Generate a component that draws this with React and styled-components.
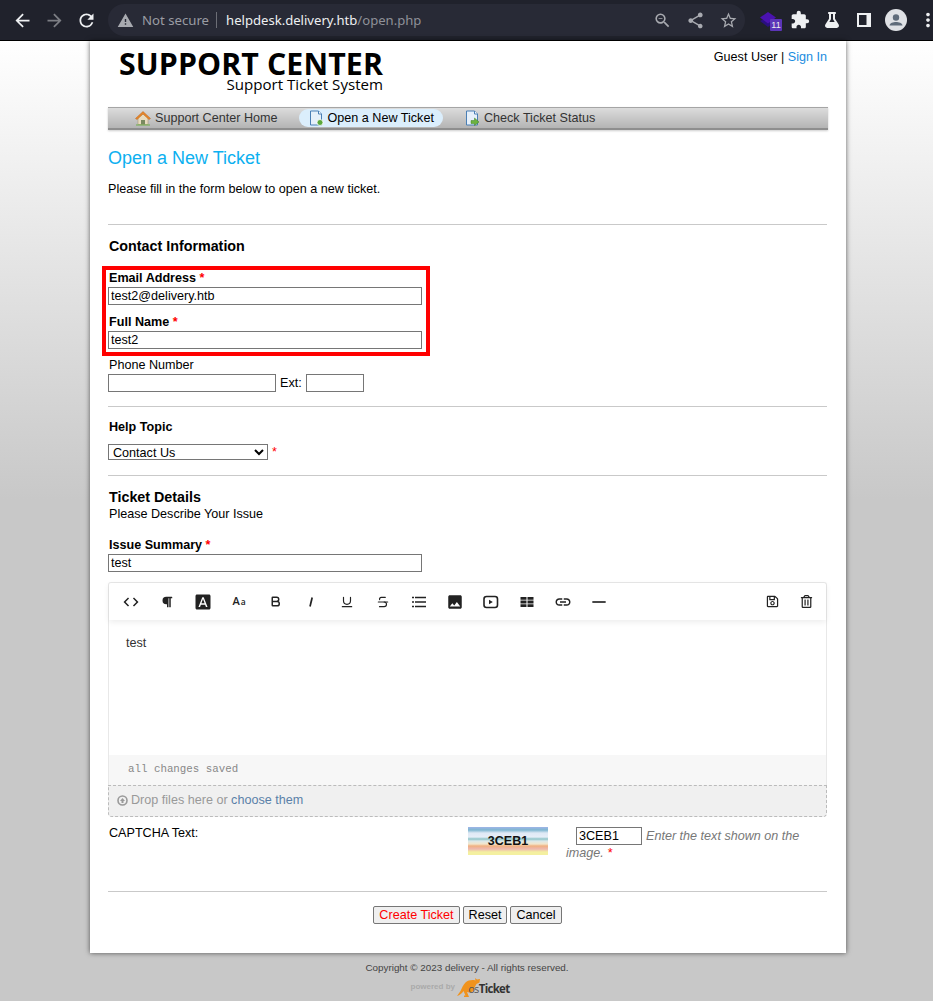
import React from 'react'
import styled, { createGlobalStyle } from 'styled-components'
import {
  MdArrowBack, MdArrowForward, MdRefresh, MdWarning, MdZoomOut, MdShare, MdStarBorder, MdExtension,
  MdMoreVert, MdCode, MdFontDownload, MdImage, MdLink, MdHorizontalRule,
} from 'react-icons/md'
import { FaParagraph, FaRegSave, FaRegTrashAlt, FaFlask } from 'react-icons/fa'
import { Bold, Underline, Strikethrough } from 'lucide-react'

const GlobalStyle = createGlobalStyle`
  html, body { margin: 0; padding: 0; height: 1001px; overflow: hidden; }
  body {
    font-family: "Liberation Sans", Arial, sans-serif;
    font-size: 12.6px;
    color: #000;
    background: linear-gradient(#ffffff 41px, #c8c8c8 500px);
  }
`

const BrowserBar = styled.div`
  height: 40px;
  box-sizing: content-box;
  border-bottom: 1px solid #000;
  background: #20222c;
  display: flex;
  align-items: center;
  color: #e8eaed;
  padding-left: 6px;
  overflow: hidden;
  > * { flex-shrink: 0; }
`
const NavBtn = styled.span`
  width: 32px;
  display: flex;
  justify-content: center;
  color: ${p => (p.$dim ? '#7c7e84' : '#eef0f2')};
  font-size: 21px;
`
const Omnibox = styled.div`
  margin-left: 6px;
  width: 637px;
  height: 32px;
  border-radius: 16px;
  background: #282a36;
  display: flex;
  align-items: center;
  padding-left: 9px;
  box-sizing: border-box;
`
const NotSecure = styled.span`
  color: #9a9ca3;
  font-family: "Noto Sans", sans-serif;
  font-size: 13.2px;
  padding-right: 7px;
  margin-left: 8px;
  border-right: 1px solid #6c6e76;
  line-height: 16px;
`
const Url = styled.span`
  margin-left: 9px;
  color: #eef0f2;
  font-family: "Noto Sans", sans-serif;
  font-size: 13.1px;
  span { color: #8f9198; }
`
const OmniIcons = styled.div`
  margin-left: auto;
  margin-right: 7px;
  display: flex;
  gap: 14px;
  color: #a8aab0;
  font-size: 19px;
`
const ExtIcons = styled.div`
  display: flex;
  align-items: center;
  margin-left: 7px;
  color: #eef0f2;
`
const ExtSlot = styled.span`
  position: relative;
  width: 32px;
  display: flex;
  justify-content: center;
  font-size: ${p => p.$size || 18}px;
`
const ExtBadge = styled.span`
  position: absolute;
  left: 18px;
  top: 8px;
  width: 12px;
  height: 12px;
  background: #5b35b8;
  color: #eee;
  font-size: 9px;
  line-height: 12px;
  text-align: center;
  border-radius: 1px;
`

const Container = styled.div`
  margin-left: 90px;
  width: 756px;
  height: 912px;
  background: #fff;
  box-shadow: 0 0 5px rgba(0, 0, 0, 0.6);
  box-sizing: border-box;
  padding: 0 19px 0 18px;
  position: relative;
`
const Header = styled.div`
  height: 66px;
  display: flex;
  justify-content: space-between;
`
const Logo = styled.div`
  margin: 8px 0 0 11px;
  font-family: "Open Sans", sans-serif;
  text-align: right;
  color: #000;
`
const LogoTitle = styled.div`
  font-size: 30.3px;
  font-weight: 700;
  line-height: 30px;
  letter-spacing: 0.1px;
`
const LogoSub = styled.div`
  font-size: 15.1px;
  line-height: 10px;
`
const UserInfo = styled.div`
  padding-top: 9px;
  line-height: 15px;
  a { color: #1a8ce0; text-decoration: none; }
`
const TopNav = styled.nav`
  height: 20px;
  margin-right: -1px;
  background: linear-gradient(#dcdcdc, #b4b4b4);
  border-top: 1px solid #a5a5a5;
  border-bottom: 2px solid #8e8e8e;
  box-shadow: 0 1px 2px rgba(0, 0, 0, 0.2);
  display: flex;
  align-items: center;
  padding-left: 27px;
  gap: 21px;
`
const NavItem = styled.a`
  display: flex;
  align-items: center;
  height: 18px;
  gap: 4px;
  color: ${p => (p.$active ? '#000' : '#333')};
  background: ${p => (p.$active ? '#dbeefc' : 'transparent')};
  border-radius: 9px;
  padding: ${p => (p.$active ? '0 9px' : '0')};
`
const PageTitle = styled.h1`
  margin: 18px 0 0;
  font-size: 18px;
  font-weight: 400;
  line-height: 21px;
  color: #0cb0f0;
`
const Intro = styled.p`
  margin: 13px 0 0;
  line-height: 15px;
`
const Rule = styled.hr`
  border: 0;
  border-top: 1px solid #c9c9c9;
  margin: ${p => p.$top}px 0 0;
`
const SectionTitle = styled.h3`
  margin: ${p => p.$top}px 0 0 1px;
  font-size: ${p => p.$size || 14.3}px;
  font-weight: 700;
  line-height: 17px;
`
const Field = styled.div`
  margin-top: ${p => p.$top}px;
`
const Label = styled.label`
  display: block;
  margin: 0 0 1px 1px;
  line-height: 15px;
  font-weight: ${p => (p.$bold ? 700 : 400)};
`
const Req = styled.span`
  color: #f00;
`
const TextInput = styled.input`
  display: block;
  box-sizing: border-box;
  width: ${p => p.$w}px;
  height: 18px;
  padding: 0 2px;
  margin: 0;
  border: 1px solid #767676;
  border-radius: 0;
  font: 12.6px "Liberation Sans", Arial, sans-serif;
  color: #000;
`
const InlineRow = styled.div`
  display: flex;
  align-items: center;
  gap: 4px;
`
const TopicSelect = styled.select`
  width: 160px;
  height: 16px;
  padding: 0;
  font: 12.6px "Liberation Sans", Arial, sans-serif;
  background: #fff;
  border: 1px solid #767676;
  border-radius: 0;
  color: #000;
`
const Plain = styled.div`
  margin-left: 1px;
  line-height: 15px;
`
const SectionHint = styled(Plain)`
  margin-top: 1px;
`
const Editor = styled.div`
  margin-top: 10px;
  height: 203px;
  border: 1px solid #e8e8e8;
  border-bottom: 0;
  border-radius: 3px 3px 0 0;
  display: flex;
  flex-direction: column;
  box-sizing: border-box;
`
const Toolbar = styled.div`
  height: 37px;
  padding: 0 3px 0 4px;
  display: flex;
  align-items: center;
  box-shadow: 0 2px 6px rgba(0, 0, 0, 0.08);
  color: #222;
`
const ToolBtn = styled.span`
  width: ${p => p.$w || 36}px;
  display: flex;
  justify-content: center;
  align-items: baseline;
  font-size: ${p => p.$size || 16}px;
  margin-left: ${p => (p.$push ? 'auto' : '0')};
`
const CaseGlyph = styled.span`
  font-family: "Open Sans", sans-serif;
  font-weight: 600;
  font-size: 11px;
  line-height: 12px;
  small { font-size: 8.5px; margin-left: 1px; }
`
const EditorBody = styled.div`
  flex: 1;
  padding: 16px 17px;
  line-height: 15px;
  color: #333;
`
const SaveStatus = styled.div`
  height: 30px;
  background: #f7f7f7;
  padding-left: 19px;
  font: 10.8px/28px "Liberation Mono", monospace;
  color: #888;
`
const DropZone = styled.div`
  height: 32px;
  box-sizing: border-box;
  border: 1px dashed #bbb;
  border-radius: 0 0 4px 4px;
  background: #f0f0f0;
  display: flex;
  align-items: center;
  padding: 0 0 2px 8px;
  gap: 3px;
  color: #999;
  a { color: #5a80a8; }
`
const CaptchaRow = styled.div`
  margin-top: 10px;
  display: grid;
  grid-template-columns: 360px 98px 1fr;
  height: 64px;
`
const CaptchaLabel = styled(Plain)`
  margin-top: -1px;
`
const CaptchaImage = styled.div`
  width: 80px;
  height: 28px;
  background: linear-gradient(#9fb5e8 0, #7fb6d0 3px, #dfe9f5 6px, #e6eef8 10px, #8fc4c8 12px, #dbe8ea 14px, #f2e6cc 17px, #f0b080 19px, #eeb8b0 22px, #f4f0a0 25px, #f4f0a0 28px);
  font: 700 12.500px/28px "Liberation Sans", sans-serif;
  text-align: center;
  color: #111;
`
const CaptchaNote = styled.div`
  line-height: 16px;
  font-style: italic;
  color: #777;
  input {
    display: inline-block;
    margin-left: 10px;
    margin-right: 4px;
    font-style: normal;
  }
`
const Actions = styled.div`
  margin-top: 14px;
  display: flex;
  justify-content: center;
  gap: 3px;
`
const ActionBtn = styled.button`
  height: 18px;
  padding: 0 5px;
  font: 12.6px "Liberation Sans", Arial, sans-serif;
  background: #efefef;
  border: 1px solid #767676;
  border-radius: 2px;
  color: ${p => (p.$primary ? '#f00' : '#000')};
`
const Footer = styled.div`
  margin: 9px 0 0 -1px;
  width: 936px;
  text-align: center;
  color: #444;
  font-size: 9.85px;
  line-height: 12px;
`
const Powered = styled.div`
  margin-top: 3px;
  padding-right: 14px;
  display: flex;
  justify-content: center;
  align-items: center;
  height: 20px;
  color: #aaa;
  font-size: 8px;
  font-weight: 700;
`
const OsText = styled.span`
  font-family: "Open Sans", sans-serif;
  font-size: 11.5px;
  font-weight: 700;
  color: #333;
  letter-spacing: -0.7px;
  margin: 3px 0 0 -13px;
  i { font-style: normal; font-weight: 400; color: #555; font-size: 11px; }
`
const Highlight = styled.div`
  position: absolute;
  left: 12px;
  top: 225px;
  width: 328px;
  height: 90px;
  box-sizing: border-box;
  border: 4px solid #f00;
`

const DocIcon = ({ badge }) => (
  <svg width="16" height="16" viewBox="0 0 16 16">
    <path d="M2.5 1h8l3 3v11h-11z" fill="#e6f0fa" stroke="#4a7fb5" />
    <path d="M10.5 1v3h3" fill="#fff" stroke="#4a7fb5" />
    {badge === 'plus'
      ? <circle cx="12" cy="12.5" r="3" fill="#5aa83c" stroke="#fff" strokeWidth="0.8" />
      : <path d="M7 10.5h3.5V8l4.5 4-4.5 3.5V13.5H7z" fill="#6cb33f" stroke="#3f7f20" strokeWidth="0.5" />}
  </svg>
)

const HomeIcon = () => (
  <svg width="16" height="16" viewBox="0 0 16 16">
    <path d="M3 8v6.5h10V8L8 3.5z" fill="#e8dcc0" stroke="#a89870" strokeWidth="0.6" />
    <path d="M.5 8.5 8 1.5l7.5 7-1.5 1L8 4 2 9.5z" fill="#e8862a" stroke="#b8641a" strokeWidth="0.5" />
    <path d="M6 10h4v4.5H6z" fill="#7a8a60" />
    <path d="M1 14.5h14v1H1z" fill="#6fae4a" />
  </svg>
)

const ItalicIcon = () => (
  <svg width="16" height="16" viewBox="0 0 16 16">
    <path d="M9.2 3.5 7 12.5" stroke="#222" strokeWidth="1.7" fill="none" />
  </svg>
)

const ListIcon = () => (
  <svg width="16" height="16" viewBox="0 0 16 16">
    <path d="M1 3.5h2M4 3.5h11M1 8h2M4 8h11M1 12.5h2M4 12.5h11" stroke="#222" strokeWidth="1.6" fill="none" />
  </svg>
)

const VideoIcon = () => (
  <svg width="16" height="16" viewBox="0 0 16 16">
    <rect x="1" y="2.5" width="13.5" height="11" rx="2.5" fill="none" stroke="#222" strokeWidth="1.6" />
    <path d="M6 5.7v4.6l3.8-2.3z" fill="#222" />
  </svg>
)

const TableIcon = () => (
  <svg width="16" height="16" viewBox="0 0 16 16">
    <path d="M1.5 3h6v2.8h-6zM8.5 3h6v2.8h-6zM1.5 6.6h6v2.8h-6zM8.5 6.6h6v2.8h-6zM1.5 10.2h6V13h-6zM8.5 10.2h6V13h-6z" fill="#222" />
  </svg>
)

const ExtensionLogo = () => (
  <svg width="18" height="18" viewBox="0 0 18 18">
    <path d="M1 10 9 6l8 4-8 6z" fill="#2a0f80" />
    <path d="M1 6.5 9 1l8 5.5-8 6z" fill="#4a12b0" />
  </svg>
)

const SidePanelIcon = () => (
  <svg width="14" height="14" viewBox="0 0 14 14">
    <path d="M0 0h14v14H0z" fill="#eef0f2" />
    <path d="M2 2h7.5v10H2z" fill="#20222c" />
  </svg>
)

const AvatarIcon = () => (
  <svg width="22" height="22" viewBox="0 0 22 22">
    <circle cx="11" cy="11" r="11" fill="#dfe1e5" />
    <circle cx="11" cy="8.5" r="3.2" fill="#5f6b7a" />
    <path d="M4.5 16.500c0-2.500 4-3.600 6.500-3.600s6.500 1.100 6.500 3.600z" fill="#5f6b7a" />
  </svg>
)

const Kangaroo = () => (
  <svg width="24" height="19" viewBox="0 0 24 19">
    <path d="M23 1l-3 .5L18 0l.5 2.500c-3-1-7-.5-10 2C6 7 5 10 3.500 13L0 18c3-1 5-2.500 6.500-5l2 4.500H7V19h5l-2-5c2 1 5 .5 7-1.500l.5-3 2-3.500 3-1.500z" fill="#f0931e" />
  </svg>
)

const App = () => {
  return (
    <>
      <GlobalStyle />
      <BrowserBar>
        <NavBtn><MdArrowBack /></NavBtn>
        <NavBtn $dim><MdArrowForward /></NavBtn>
        <NavBtn><MdRefresh /></NavBtn>
        <Omnibox>
          <MdWarning size={17} color="#a8aab0" />
          <NotSecure>Not secure</NotSecure>
          <Url>helpdesk.delivery.htb<span>/open.php</span></Url>
          <OmniIcons>
            <MdZoomOut />
            <MdShare />
            <MdStarBorder />
          </OmniIcons>
        </Omnibox>
        <ExtIcons>
          <ExtSlot><ExtensionLogo /><ExtBadge>11</ExtBadge></ExtSlot>
          <ExtSlot $size={20}><MdExtension /></ExtSlot>
          <ExtSlot $size={16}><FaFlask /></ExtSlot>
          <ExtSlot><SidePanelIcon /></ExtSlot>
          <ExtSlot><AvatarIcon /></ExtSlot>
          <ExtSlot $size={22}><MdMoreVert /></ExtSlot>
        </ExtIcons>
      </BrowserBar>

      <Container>
        <Header>
          <Logo>
            <LogoTitle>SUPPORT CENTER</LogoTitle>
            <LogoSub>Support Ticket System</LogoSub>
          </Logo>
          <UserInfo>Guest User | <a href="#">Sign In</a></UserInfo>
        </Header>

        <TopNav>
          <NavItem><HomeIcon />Support Center Home</NavItem>
          <NavItem $active><DocIcon badge="plus" />Open a New Ticket</NavItem>
          <NavItem><DocIcon badge="arrow" />Check Ticket Status</NavItem>
        </TopNav>

        <PageTitle>Open a New Ticket</PageTitle>
        <Intro>Please fill in the form below to open a new ticket.</Intro>
        <Rule $top={27} />

        <SectionTitle $top={13}>Contact Information</SectionTitle>
        <Field $top={16}>
          <Label $bold>Email Address <Req>*</Req></Label>
          <TextInput $w={314} defaultValue="test2@delivery.htb" />
        </Field>
        <Field $top={10}>
          <Label $bold>Full Name <Req>*</Req></Label>
          <TextInput $w={314} defaultValue="test2" />
        </Field>
        <Field $top={9}>
          <Label>Phone Number</Label>
          <InlineRow>
            <TextInput $w={168} />
            Ext:
            <TextInput $w={58} />
          </InlineRow>
        </Field>
        <Rule $top={14} />

        <SectionTitle as="div" $size={12.6} $top={12}>Help Topic</SectionTitle>
        <Field $top={8}>
          <InlineRow>
            <TopicSelect defaultValue="Contact Us">
              <option>Contact Us</option>
            </TopicSelect>
            <Req>*</Req>
          </InlineRow>
        </Field>
        <Rule $top={15} />

        <SectionTitle $top={13}>Ticket Details</SectionTitle>
        <SectionHint>Please Describe Your Issue</SectionHint>
        <Field $top={16}>
          <Label $bold>Issue Summary <Req>*</Req></Label>
          <TextInput $w={314} defaultValue="test" />
        </Field>

        <Editor>
          <Toolbar>
            <ToolBtn $size={18}><MdCode /></ToolBtn>
            <ToolBtn $size={12}><FaParagraph /></ToolBtn>
            <ToolBtn $size={18}><MdFontDownload /></ToolBtn>
            <ToolBtn><CaseGlyph>A<small>a</small></CaseGlyph></ToolBtn>
            <ToolBtn><Bold size={13} strokeWidth={2.7} /></ToolBtn>
            <ToolBtn><ItalicIcon /></ToolBtn>
            <ToolBtn><Underline size={14} strokeWidth={2} /></ToolBtn>
            <ToolBtn><Strikethrough size={14} strokeWidth={2} /></ToolBtn>
            <ToolBtn><ListIcon /></ToolBtn>
            <ToolBtn $size={18}><MdImage /></ToolBtn>
            <ToolBtn><VideoIcon /></ToolBtn>
            <ToolBtn><TableIcon /></ToolBtn>
            <ToolBtn $size={18}><MdLink /></ToolBtn>
            <ToolBtn $size={20}><MdHorizontalRule /></ToolBtn>
            <ToolBtn $push $w={34} $size={13}><FaRegSave /></ToolBtn>
            <ToolBtn $w={34} $size={13}><FaRegTrashAlt /></ToolBtn>
          </Toolbar>
          <EditorBody>test</EditorBody>
          <SaveStatus>all changes saved</SaveStatus>
        </Editor>
        <DropZone>
          <svg width="11" height="11" viewBox="0 0 11 11">
            <circle cx="5.5" cy="5.5" r="4.5" fill="none" stroke="#999" strokeWidth="1.6" />
            <path d="M5.5 3 8 6H6.5v2h-2V6H3z" fill="#999" />
          </svg>
          <span>Drop files here or <a>choose them</a></span>
        </DropZone>

        <CaptchaRow>
          <CaptchaLabel>CAPTCHA Text:</CaptchaLabel>
          <CaptchaImage>3CEB1</CaptchaImage>
          <CaptchaNote>
            <TextInput $w={66} defaultValue="3CEB1" />
            Enter the text shown on the image. <Req>*</Req>
          </CaptchaNote>
        </CaptchaRow>
        <Rule $top={0} />

        <Actions>
          <ActionBtn $primary>Create Ticket</ActionBtn>
          <ActionBtn>Reset</ActionBtn>
          <ActionBtn>Cancel</ActionBtn>
        </Actions>

        <Highlight />
      </Container>

      <Footer>
        Copyright © 2023 delivery - All rights reserved.
        <Powered>powered by&nbsp;<Kangaroo /><OsText><i>os</i>Ticket</OsText></Powered>
      </Footer>
    </>
  )
}

export default App
